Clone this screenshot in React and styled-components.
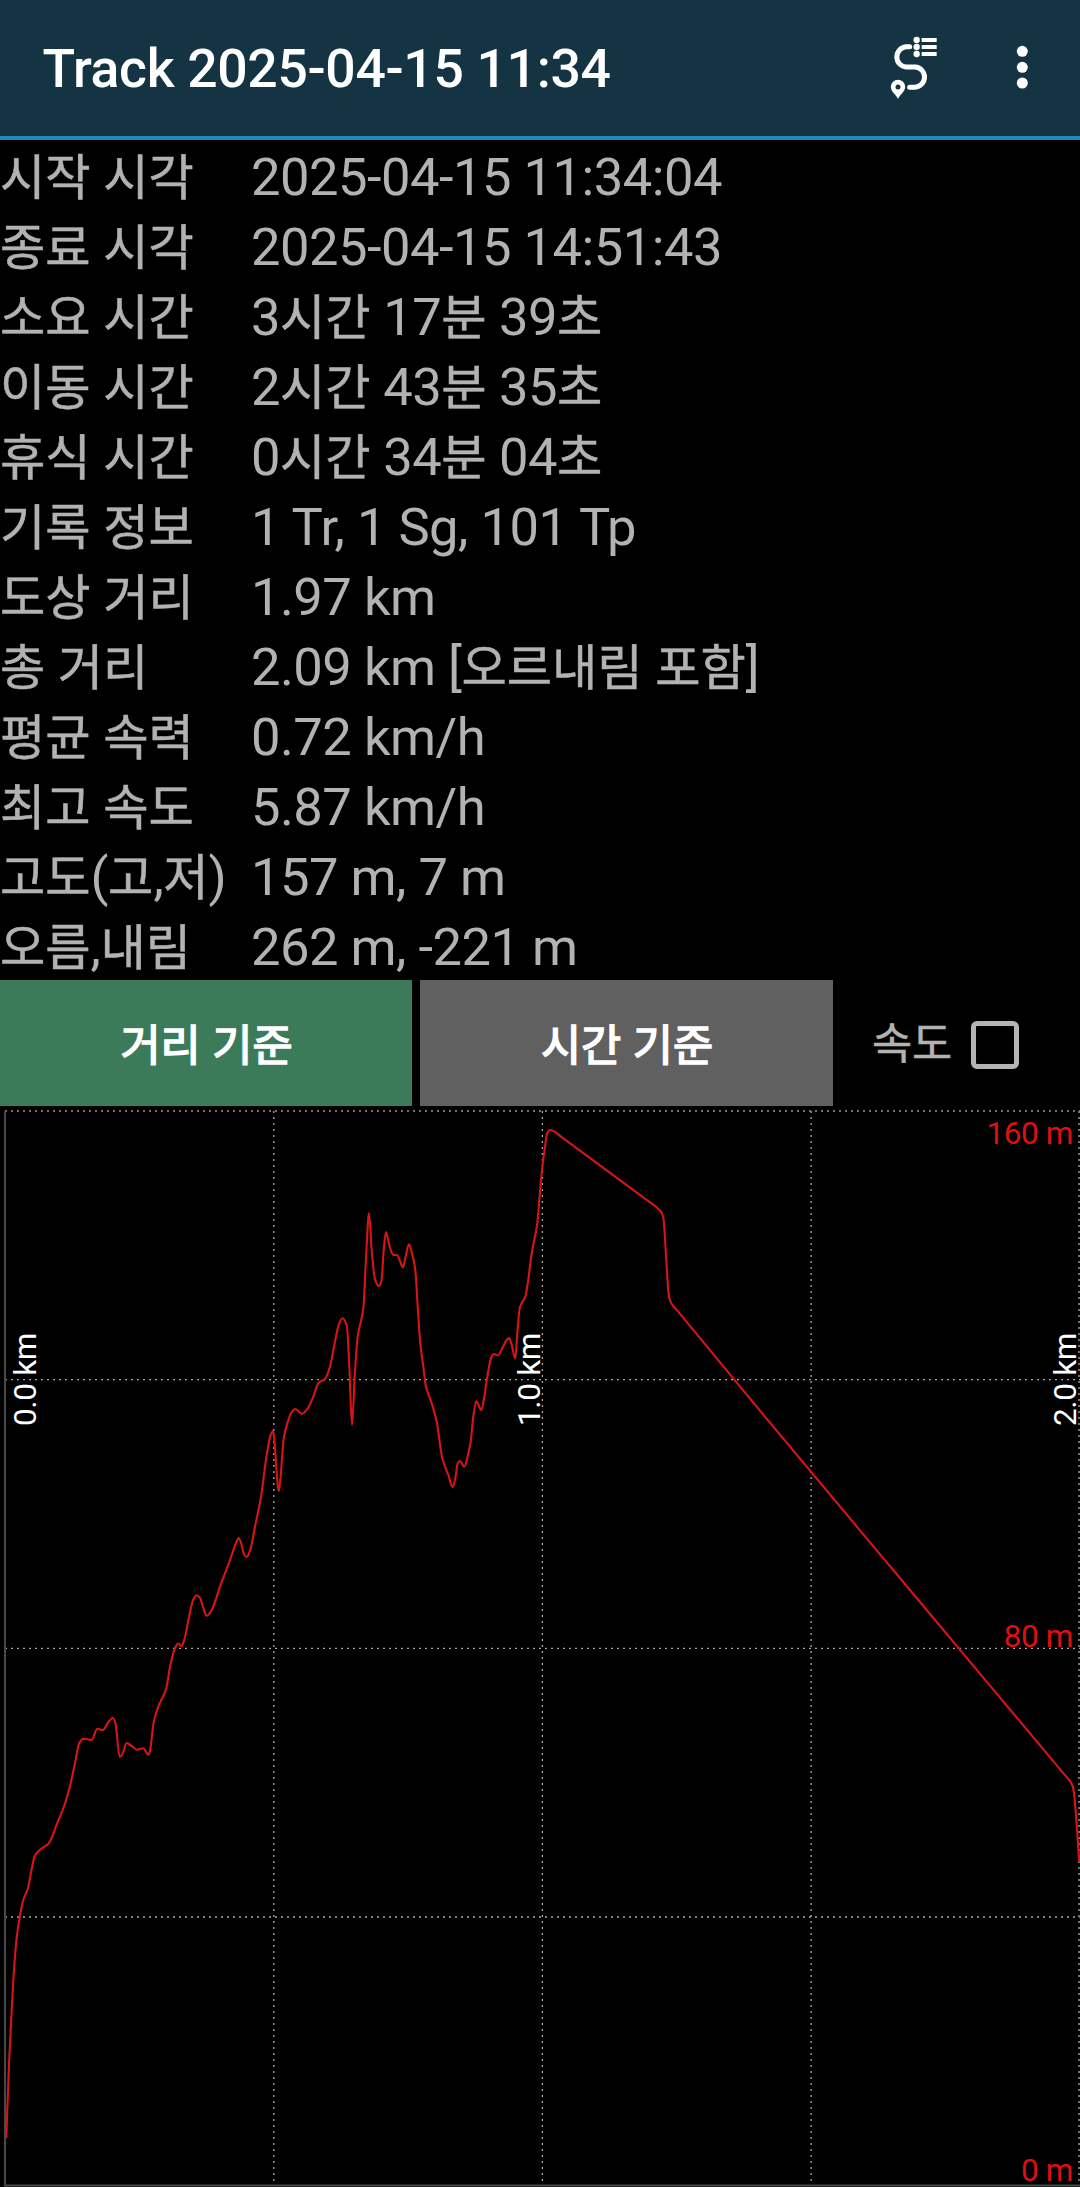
import React from "react";
import styled, { createGlobalStyle } from "styled-components";

const GlobalStyle = createGlobalStyle`
  * { box-sizing: border-box; }
  html, body { margin: 0; background: #000; }
  body { font-family: Roboto, "Noto Sans CJK KR", sans-serif; }
`;

const Screen = styled.div`
  width: 1080px;
  height: 2187px;
  display: flex;
  flex-direction: column;
  background: #000;
  color: #b2b2b2;
  overflow: hidden;
`;

const TopBar = styled.header`
  height: 140px;
  flex: none;
  display: flex;
  align-items: center;
  padding: 0 51px 0 42.5px;
  background: #143444;
  border-bottom: 4px solid #1f8db5;
`;

const Title = styled.h1`
  flex: 1;
  margin: 0;
  padding-top: 2px;
  font-size: 53.5px;
  font-weight: 500;
  line-height: 64px;
  letter-spacing: -0.33px;
  color: #fff;
  white-space: nowrap;
`;

const IconButton = styled.button`
  display: flex;
  padding: 0;
  border: 0;
  background: none;
  color: #fff;
  margin-left: ${(p) => p.$gap || 0}px;
`;

const InfoTable = styled.dl`
  margin: 0;
  flex: none;
`;

const InfoRow = styled.div`
  height: 70px;
  display: grid;
  grid-template-columns: 251px 1fr;
  align-items: center;
  padding-top: 5px;
  font-size: 52.5px;
  line-height: 65px;
  letter-spacing: -0.5px;
  white-space: pre;
`;

const Label = styled.dt`
  margin: 0;
`;

const Value = styled.dd`
  margin: 0;
`;

const Hangul = styled.span`
  font-size: 0.938em;
  line-height: 1;
  letter-spacing: 0;
  -webkit-text-stroke: 0.5px currentColor;
`;

const ModeBar = styled.div`
  height: 126px;
  flex: none;
  display: flex;
  gap: 8px;
`;

const ModeButton = styled.button`
  width: ${(p) => p.$width}px;
  border: 0;
  padding: 3px 0 0 1px;
  background: ${(p) => (p.$active ? "#3b7b59" : "#606060")};
  color: #fff;
  font-family: inherit;
  font-size: 46.5px;
  font-weight: 400;

  ${Hangul} {
    -webkit-text-stroke-width: 1.6px;
  }
`;

const SpeedToggle = styled.label`
  flex: 1;
  display: flex;
  align-items: center;
  padding: 4px 0 0 31px;
  font-size: 46.5px;
  line-height: 60px;
`;

const Check = styled.span`
  width: 48px;
  height: 48px;
  margin-left: 19px;
  border: 5px solid #b5b3b5;
  border-radius: 6px;
`;

const Chart = styled.svg`
  display: block;
  flex: none;
  width: 1080px;
  height: 1081px;
`;

const GridLine = styled.line`
  stroke: ${(p) => p.$tone || "#a8a8a8"};
  stroke-width: ${(p) => p.$weight || 1.3};
  stroke-dasharray: 2 4;
`;

const AxisLine = styled.line`
  stroke: #484848;
  stroke-width: 2;
`;

const Profile = styled.path`
  fill: none;
  stroke: #d81414;
  stroke-width: 2.1;
  stroke-linejoin: round;
`;

const HeightText = styled.text`
  fill: #dc1010;
  font-size: 31.5px;
  letter-spacing: -0.4px;
  text-anchor: end;
`;

const DistanceText = styled.text`
  fill: #fff;
  font-size: 31.5px;
  letter-spacing: -0.35px;
`;

const rows = [
  ["시작 시각", "2025-04-15 11:34:04"],
  ["종료 시각", "2025-04-15 14:51:43"],
  ["소요 시간", "3시간 17분 39초"],
  ["이동 시간", "2시간 43분 35초"],
  ["휴식 시간", "0시간 34분 04초"],
  ["기록 정보", "1 Tr, 1 Sg, 101 Tp"],
  ["도상 거리", "1.97 km"],
  ["총 거리", "2.09 km [오르내림 포함]"],
  ["평균 속력", "0.72 km/h"],
  ["최고 속도", "5.87 km/h"],
  ["고도(고,저)", "157 m, 7 m"],
  ["오름,내림", "262 m, -221 m"],
];

const profile = [
  [6.3, 2138], [9, 2064.4], [11.3, 2018], [14, 1970], [16.7, 1937.7], [20, 1915.4], [23.3, 1900],
  [28, 1888], [31.7, 1869], [34.7, 1856], [40, 1849.7], [48.7, 1843.5], [57.3, 1823], [64, 1806.5],
  [69.3, 1788.7], [74.7, 1764.7], [79.3, 1743], [83.3, 1738.7], [91.7, 1740], [97.3, 1728.8],
  [103, 1730], [108.3, 1722], [112.7, 1718], [115.3, 1722.6], [119.7, 1756.8], [122, 1754.8],
  [126.7, 1743], [131.7, 1746], [137, 1749.7], [143, 1748.3], [148.7, 1754.8], [150.3, 1749],
  [153.7, 1722], [158.3, 1706.5], [166, 1689.4], [170.3, 1665.4], [174.7, 1649], [178, 1643.5],
  [181.4, 1646], [184.5, 1639], [189, 1617], [193.5, 1599], [196.7, 1595.3], [200, 1597.7],
  [203.3, 1608], [206.7, 1615.7], [211.7, 1610], [220, 1586.7], [230, 1560], [236, 1543],
  [238.7, 1538], [240.7, 1541.7], [244.3, 1555], [246.7, 1557], [250, 1550.7], [255, 1526.7],
  [261, 1496.7], [266.7, 1455], [270.7, 1435], [273, 1431], [274, 1436.7], [278.7, 1491],
  [280, 1483], [284, 1436.7], [287.3, 1423.3], [292, 1411.7], [295.3, 1409], [302, 1413.7],
  [307.3, 1409], [312.7, 1398.3], [318.7, 1382.7], [324.7, 1379.3], [330, 1366.7], [334, 1346.7],
  [338.7, 1325], [342.3, 1318.3], [346.7, 1325], [349.3, 1366.7], [352, 1425], [354.7, 1376.7],
  [357.7, 1336.7], [363.3, 1308.3], [366, 1258.3], [369, 1213.3], [371.7, 1250], [375, 1279.3],
  [378.7, 1286], [381.3, 1281.7], [384, 1246.7], [386, 1232], [389.3, 1245], [393, 1254.7],
  [397.3, 1255.3], [400.3, 1262], [403, 1267.3], [405.3, 1258.3], [409, 1244.3], [412, 1253.3],
  [415.3, 1270], [417.7, 1306.7], [420.3, 1343.3], [423.3, 1366.7], [426, 1386.7], [431.7, 1403.3],
  [436.7, 1421.7], [442.3, 1458.3], [448.3, 1475], [452.7, 1487], [455.3, 1478.3], [457.7, 1463.3],
  [459.7, 1461], [464.3, 1466.7], [468, 1455], [470.7, 1441.7], [473.3, 1416.7], [476.3, 1401.3],
  [481.3, 1410], [483.3, 1402.7], [487.3, 1376.7], [491.3, 1357.3], [493.7, 1354], [497.7, 1355.3],
  [502.7, 1347.3], [506.7, 1340], [509, 1338], [511.3, 1343.3], [515.3, 1358.7], [517.3, 1333.3],
  [520, 1306.7], [525.3, 1296.7], [528, 1281.7], [531.7, 1253.3], [537.3, 1223.3], [539.3, 1200],
  [541, 1180], [542.7, 1164], [545, 1146.7], [547.3, 1132.7], [550, 1130], [553.3, 1131],
  [562, 1137.4], [648, 1200.9], [656.7, 1207.3], [661.7, 1212.7], [663.3, 1217.3], [666, 1255],
  [669, 1296.7], [671.3, 1303.3], [680, 1313.8], [740, 1386.7], [918.3, 1600], [1062, 1771.6],
  [1070, 1781.2], [1072.3, 1785.3], [1073.7, 1791], [1079.3, 1862],
];

// Monotone cubic through the samples, so peaks stay exactly where they were recorded.
function smoothPath(points) {
  const n = points.length;
  const slope = [];
  for (let i = 0; i < n - 1; i++) {
    slope.push((points[i + 1][1] - points[i][1]) / (points[i + 1][0] - points[i][0]));
  }
  const tangent = points.map((_, i) => {
    if (i === 0) return slope[0];
    if (i === n - 1) return slope[n - 2];
    const a = slope[i - 1];
    const b = slope[i];
    return a * b <= 0 ? 0 : (2 * a * b) / (a + b);
  });
  let d = `M${points[0][0]} ${points[0][1]}`;
  for (let i = 0; i < n - 1; i++) {
    const [x0, y0] = points[i];
    const [x1, y1] = points[i + 1];
    const h = (x1 - x0) / 3;
    d += `C${x0 + h} ${y0 + h * tangent[i]} ${x1 - h} ${y1 - h * tangent[i + 1]} ${x1} ${y1}`;
  }
  return d;
}

function Text({ children }) {
  return children
    .split(/([가-힣]+)/)
    .filter(Boolean)
    .map((part, i) => (/[가-힣]/.test(part) ? <Hangul key={i}>{part}</Hangul> : part));
}

function RouteListIcon() {
  return (
    <svg width="50" height="65" viewBox="90 75 150 195" fill="currentColor">
      <path
        d="M152 107.500H142A30.300 30.300 0 0 0 142 168H168A30.300 30.300 0 0 1 168 228.500H152"
        fill="none"
        stroke="currentColor"
        strokeWidth="15"
        strokeLinecap="round"
      />
      <path
        fillRule="evenodd"
        d="M117 264C112 252 95.500 242 95.500 227.500A21.500 21.500 0 0 1 138.500 227.500C138.500 242 122 252 117 264ZM117 220.500A7.500 7.500 0 1 0 117 235.500A7.500 7.500 0 1 0 117 220.500Z"
      />
      {[87, 108, 129].map((y) => (
        <g key={y}>
          <circle cx="173" cy={y} r="9.500" />
          <rect x="188" y={y - 6} width="45" height="12" />
        </g>
      ))}
    </svg>
  );
}

function MoreIcon() {
  return (
    <svg width="14" height="48" viewBox="0 0 14 48" fill="currentColor">
      {[7.3, 23.3, 39].map((y) => (
        <circle key={y} cx="7.3" cy={y} r="5.500" />
      ))}
    </svg>
  );
}

function ElevationChart() {
  return (
    <Chart viewBox="0 1106 1080 1081">
      <GridLine x1="5" y1="1111" x2="1080" y2="1111" $weight={2} $tone="#707070" />
      {[1379.7, 1648.4, 1917].map((y) => (
        <GridLine key={y} x1="5" y1={y} x2="1080" y2={y} />
      ))}
      {[273.8, 542.4, 811.1].map((x) => (
        <GridLine key={x} x1={x} y1="1111" x2={x} y2="2185" />
      ))}
      <GridLine x1="1079" y1="1111" x2="1079" y2="2185" $weight={2} $tone="#707070" />
      <AxisLine x1="5" y1="1111" x2="5" y2="2186" />
      <AxisLine x1="4" y1="2185.500" x2="1080" y2="2185.500" />
      <Profile d={smoothPath(profile)} />
      <HeightText x="1073" y="1144">160 m</HeightText>
      <HeightText x="1073" y="1647">80 m</HeightText>
      <HeightText x="1073" y="2181">0 m</HeightText>
      <DistanceText transform="translate(36 1426) rotate(-90)">0.0 km</DistanceText>
      <DistanceText transform="translate(540 1426) rotate(-90)">1.0 km</DistanceText>
      <DistanceText transform="translate(1076 1426) rotate(-90)">2.0 km</DistanceText>
    </Chart>
  );
}

export default function App() {
  return (
    <Screen>
      <GlobalStyle />
      <TopBar>
        <Title>Track 2025-04-15 11:34</Title>
        <IconButton>
          <RouteListIcon />
        </IconButton>
        <IconButton $gap={76}>
          <MoreIcon />
        </IconButton>
      </TopBar>
      <InfoTable>
        {rows.map(([label, value]) => (
          <InfoRow key={label}>
            <Label>
              <Text>{label}</Text>
            </Label>
            <Value>
              <Text>{value}</Text>
            </Value>
          </InfoRow>
        ))}
      </InfoTable>
      <ModeBar>
        <ModeButton $active $width={412}>
          <Text>거리 기준</Text>
        </ModeButton>
        <ModeButton $width={413}>
          <Text>시간 기준</Text>
        </ModeButton>
        <SpeedToggle>
          <Text>속도</Text>
          <Check />
        </SpeedToggle>
      </ModeBar>
      <ElevationChart />
    </Screen>
  );
}
